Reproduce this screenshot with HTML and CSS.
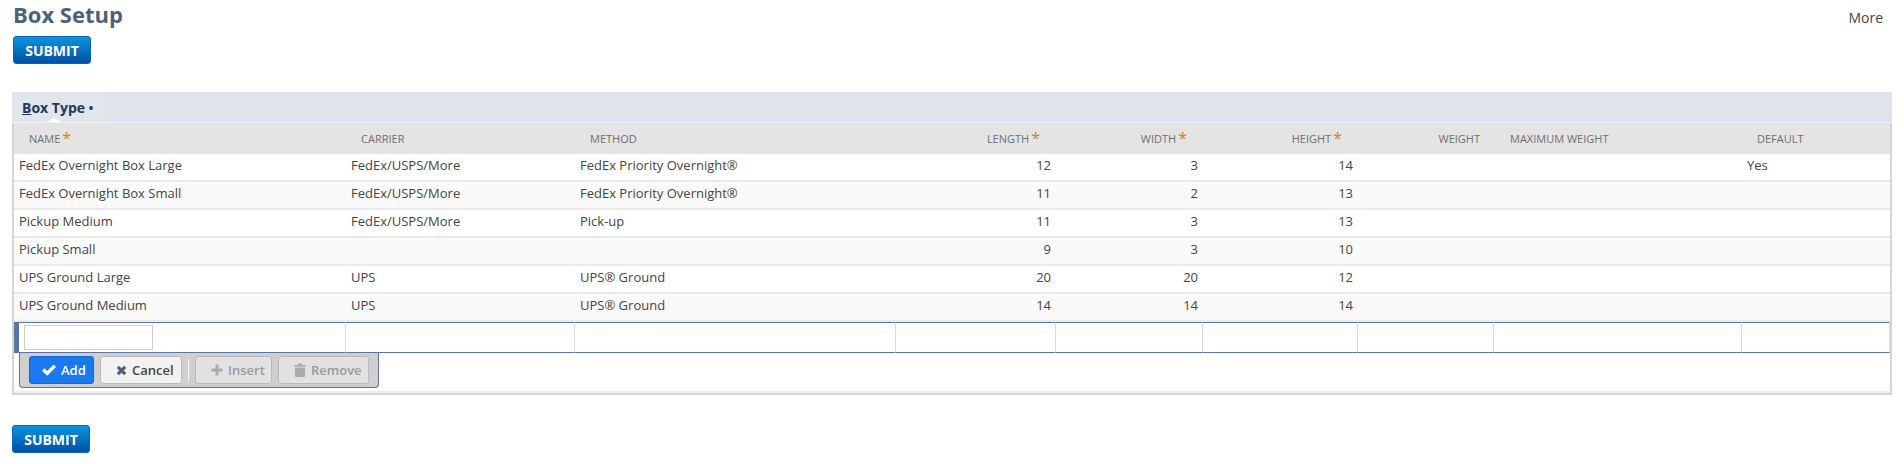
FILE: index.html
```html
<!DOCTYPE html>
<html lang="en">
<head>
    <meta charset="UTF-8">
    <meta name="viewport" content="width=device-width, initial-scale=1.0">
    <title>Box Setup</title>
    <link rel="stylesheet" href="styles.css">
</head>
<body>
    <div class="page-header">
        <div>
            <h1>Box Setup</h1>
            <button type="button" class="submit-btn">Submit</button>
        </div>
        <a class="more-link" href="#">More</a>
    </div>

    <div class="panel">
        <div class="tab-band">
            <div class="tab"><span><u>B</u>ox Type</span> <span class="tab-dot">&bull;</span></div>
        </div>
        <div class="panel-body">
            <table class="box-table">
                <colgroup>
                    <col class="col-name">
                    <col class="col-carrier">
                    <col class="col-method">
                    <col class="col-length">
                    <col class="col-width">
                    <col class="col-height">
                    <col class="col-weight">
                    <col class="col-max">
                    <col>
                </colgroup>
                <thead>
                    <tr>
                        <th>Name<span class="req">*</span></th>
                        <th>Carrier</th>
                        <th>Method</th>
                        <th class="num">Length<span class="req">*</span></th>
                        <th class="num">Width<span class="req">*</span></th>
                        <th class="num">Height<span class="req">*</span></th>
                        <th class="num weight-head">Weight</th>
                        <th class="max-head">Maximum Weight</th>
                        <th>Default</th>
                    </tr>
                </thead>
                <tbody>
                    <tr>
                        <td>FedEx Overnight Box Large</td>
                        <td>FedEx/USPS/More</td>
                        <td>FedEx Priority Overnight®</td>
                        <td class="num">12</td>
                        <td class="num">3</td>
                        <td class="num">14</td>
                        <td></td>
                        <td></td>
                        <td>Yes</td>
                    </tr>
                    <tr>
                        <td>FedEx Overnight Box Small</td>
                        <td>FedEx/USPS/More</td>
                        <td>FedEx Priority Overnight®</td>
                        <td class="num">11</td>
                        <td class="num">2</td>
                        <td class="num">13</td>
                        <td></td>
                        <td></td>
                        <td></td>
                    </tr>
                    <tr>
                        <td>Pickup Medium</td>
                        <td>FedEx/USPS/More</td>
                        <td>Pick-up</td>
                        <td class="num">11</td>
                        <td class="num">3</td>
                        <td class="num">13</td>
                        <td></td>
                        <td></td>
                        <td></td>
                    </tr>
                    <tr>
                        <td>Pickup Small</td>
                        <td></td>
                        <td></td>
                        <td class="num">9</td>
                        <td class="num">3</td>
                        <td class="num">10</td>
                        <td></td>
                        <td></td>
                        <td></td>
                    </tr>
                    <tr>
                        <td>UPS Ground Large</td>
                        <td>UPS</td>
                        <td>UPS® Ground</td>
                        <td class="num">20</td>
                        <td class="num">20</td>
                        <td class="num">12</td>
                        <td></td>
                        <td></td>
                        <td></td>
                    </tr>
                    <tr>
                        <td>UPS Ground Medium</td>
                        <td>UPS</td>
                        <td>UPS® Ground</td>
                        <td class="num">14</td>
                        <td class="num">14</td>
                        <td class="num">14</td>
                        <td></td>
                        <td></td>
                        <td></td>
                    </tr>
                    <tr class="edit-row">
                        <td><input type="text" class="name-input"></td>
                        <td></td>
                        <td></td>
                        <td></td>
                        <td></td>
                        <td></td>
                        <td></td>
                        <td></td>
                        <td></td>
                    </tr>
                </tbody>
            </table>

            <div class="row-actions">
                <button type="button" class="action-btn primary">
                    <svg viewBox="0 0 14 12" width="14" height="12"><path d="M1.2 5.6 L5.2 9.4 L12.8 1.8" fill="none" stroke="#fff" stroke-width="3.4"/></svg>
                    Add
                </button>
                <button type="button" class="action-btn btn-cancel">
                    <svg viewBox="0 0 12 12" width="11" height="11"><path d="M2 2 L10 10 M10 2 L2 10" fill="none" stroke="#4d5f79" stroke-width="3.4"/></svg>
                    Cancel
                </button>
                <span class="action-sep"></span>
                <button type="button" class="action-btn disabled btn-insert">
                    <svg viewBox="0 0 12 12" width="12" height="12"><path d="M6 0.5 V11.5 M0.5 6 H11.5" fill="none" stroke="#aaa" stroke-width="3"/></svg>
                    Insert
                </button>
                <button type="button" class="action-btn disabled btn-remove">
                    <svg viewBox="0 0 12 14" width="12" height="14"><path d="M0 2 H4 V0.5 H8 V2 H12 V3.5 H0 Z M1 4.5 H11 V13 Q11 14 10 14 H2 Q1 14 1 13 Z" fill="#aaa"/></svg>
                    Remove
                </button>
            </div>
        </div>
    </div>

    <button type="button" class="submit-btn bottom">Submit</button>
</body>
</html>
```

FILE: styles.css
```css
/* Reset & Base Styles */
* {
    box-sizing: border-box;
    margin: 0;
    padding: 0;
    font-family: 'Open Sans', 'Liberation Sans', sans-serif;
}

body {
    background: #fff;
    color: #444;
    font-size: 13px;
    padding: 0 12px;
}

/* Page Header */
.page-header {
    display: flex;
    justify-content: space-between;
    align-items: flex-start;
    height: 92px;
}

h1 {
    font-size: 22px;
    font-weight: 700;
    line-height: 22px;
    margin: 3px 0 11px 1px;
    color: #4d5f79;
}

.more-link {
    margin: 9px 9px 0 0;
    font-size: 14px;
    line-height: 18px;
    color: #444;
    text-decoration: none;
}

/* Submit Button */
.submit-btn {
    display: block;
    width: 78px;
    height: 28px;
    margin-left: 1px;
    background: linear-gradient(#0b94e0, #0050a4);
    border: 1px solid #0a67b5;
    border-radius: 3px;
    color: #fff;
    font-size: 14px;
    font-weight: 700;
    text-transform: uppercase;
}

.submit-btn.bottom {
    margin: 30px 0 0 0;
}

/* Panel */
.panel {
    width: 1880px;
}

.tab-band {
    height: 31px;
    background: #dfe3eb;
    border-bottom: 1px solid #f0f0f0;
}

.tab {
    position: relative;
    width: 93px;
    height: 30px;
    padding: 6px 0 0 10px;
    background: #e1e5ec;
    color: #24385b;
    font-size: 14px;
    line-height: 20px;
    font-weight: 700;
}

.tab u {
    text-decoration-thickness: 1px;
}

.tab-dot {
    font-size: 12px;
}

.tab::after {
    content: "";
    position: absolute;
    left: 35px;
    bottom: 0;
    border-left: 7px solid transparent;
    border-right: 7px solid transparent;
    border-bottom: 4px solid #fff;
}

.panel-body {
    height: 272px;
    border: 2px solid #d4d4d4;
    border-top: none;
    box-shadow: inset 0 -2px 0 #eee;
}

/* Table */
.box-table {
    width: 1876px;
    table-layout: fixed;
    border-collapse: separate;
    border-spacing: 0;
}

.col-name { width: 332px; }
.col-carrier { width: 229px; }
.col-method { width: 321px; }
.col-length { width: 160px; }
.col-width { width: 147px; }
.col-height { width: 155px; }
.col-weight { width: 136px; }
.col-max { width: 248px; }

.box-table th {
    height: 31px;
    padding: 0 15px;
    background: #e4e4e4;
    color: #6f6f6f;
    font-size: 11px;
    font-weight: 400;
    text-align: left;
    text-transform: uppercase;
}

.box-table td {
    height: 28px;
    padding: 0 5px 5px;
    border-bottom: 2px solid #eaeaea;
    font-size: 13px;
    color: #444;
    white-space: nowrap;
}

.box-table tbody tr:nth-child(even) td {
    background: #fafafa;
}

.box-table th.num {
    padding-right: 16px;
    text-align: right;
}

.box-table th.weight-head {
    padding-right: 14px;
}

.box-table th.max-head {
    padding-left: 16px;
}

.box-table td.num {
    text-align: right;
}

.req {
    color: #c8842a;
    font-size: 16px;
    line-height: 10px;
    margin-left: 2px;
    vertical-align: -1px;
}

/* Edit Row */
.box-table .edit-row td {
    height: 31px;
    padding: 0;
    background: #fff;
    border-top: 1px solid #5a75a5;
    border-bottom: 1px solid #5a75a5;
    border-right: 1px solid #dcdcdc;
}

.box-table .edit-row td:first-child {
    border-left: 5px solid #5a75a5;
    padding-left: 5px;
}

.name-input {
    display: block;
    width: 129px;
    height: 25px;
    border: 1px solid #ccc;
    background: #fff;
}

/* Row Actions */
.row-actions {
    display: flex;
    align-items: center;
    gap: 6px;
    width: 360px;
    height: 35px;
    margin-left: 5px;
    padding: 0 9px;
    background: #cfcfcf;
    border: 1px solid #5a75a5;
    border-top: none;
    border-radius: 0 0 4px 4px;
}

.action-btn {
    display: flex;
    align-items: center;
    gap: 5px;
    height: 28px;
    padding: 0 0 0 15px;
    background: #f2f2f2;
    border: 1px solid #bbb;
    border-radius: 3px;
    color: #444;
    font-size: 13px;
    font-weight: 600;
}

.action-btn.primary {
    width: 65px;
    padding-left: 12px;
    background: #1a78f0;
    border-color: #1466d0;
    color: #fff;
}

.btn-cancel { width: 82px; }
.btn-insert { width: 77px; }
.btn-remove { width: 91px; }

.action-btn.disabled {
    background: #e2e2e2;
    color: #999;
}

.action-sep {
    width: 1px;
    height: 22px;
    background: #f4f4f4;
}
```
